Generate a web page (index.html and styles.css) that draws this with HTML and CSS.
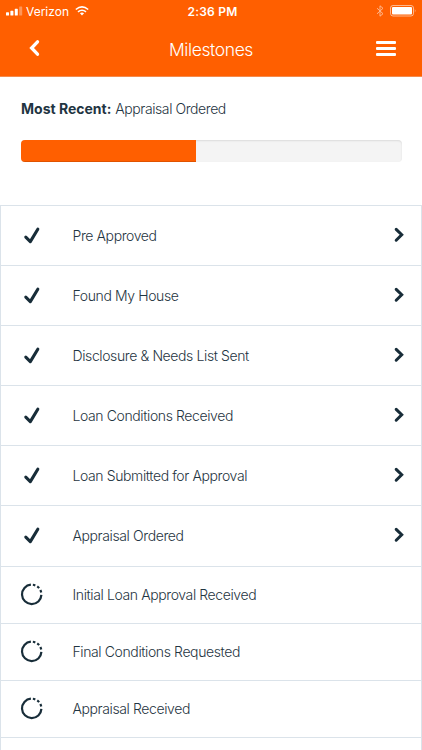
FILE: index.html
```html
<!DOCTYPE html>
<html lang="en">
<head>
    <meta charset="UTF-8">
    <meta name="viewport" content="width=device-width, initial-scale=1.0">
    <title>Milestones</title>
    <link rel="stylesheet" href="styles.css">
</head>
<body>
    <svg class="symbols">
        <symbol id="check" viewBox="0 0 24 24">
            <path d="M5.8 13.2L10.3 17.6L17.8 5.2" fill="none" stroke="currentColor" stroke-width="3.1" stroke-linecap="round" stroke-linejoin="round"/>
        </symbol>
        <symbol id="pending" viewBox="0 0 24 24">
            <path d="M21.4 11.9A9.7 9.7 0 1 1 10.9 1.7" fill="none" stroke="currentColor" stroke-width="2.2"/>
            <path d="M11.7 1.7A9.7 9.7 0 0 1 21.4 11.4" fill="none" stroke="currentColor" stroke-width="2.2" stroke-dasharray="0 1.2 2.5 2.2 2.5 2.2 2.5 9"/>
        </symbol>
        <symbol id="arrow" viewBox="0 0 12 18">
            <path d="M3.2 3.4L8.7 8.8L3.2 14.2" fill="none" stroke="currentColor" stroke-width="3" stroke-linecap="round"/>
        </symbol>
    </svg>

    <header class="header">
        <div class="status">
            <div class="carrier">
                <svg width="17" height="10" viewBox="0 0 17 10" fill="#fff">
                    <rect x="0" y="6.2" width="3" height="3.3" rx=".6"/>
                    <rect x="4.4" y="4.8" width="3" height="4.7" rx=".6"/>
                    <rect x="8.8" y="2.8" width="3" height="6.7" rx=".6"/>
                    <rect x="13.2" y=".5" width="3" height="9" rx=".6" opacity=".35"/>
                </svg>
                <span class="carrier-name">Verizon</span>
                <svg width="14" height="10" viewBox="0 0 14 10" fill="none" stroke="#fff" stroke-width="1.6">
                    <path d="M.8 3.5Q7 -1.7 13.2 3.5"/>
                    <path d="M3 5.9Q7 2.6 11 5.9"/>
                    <path d="M4.9 7.3Q7 5.8 9.1 7.3L7 9.6Z" fill="#fff" stroke="none"/>
                </svg>
            </div>
            <div class="time">2:36 PM</div>
            <div class="battery">
                <svg width="8" height="12" viewBox="0 0 8 12" fill="none" stroke="#fff" opacity=".55">
                    <path d="M1 3.2L7 8.7L4 11.2V.8L7 3.3L1 8.8"/>
                </svg>
                <svg width="27" height="12" viewBox="0 0 27 12">
                    <rect x=".5" y=".5" width="23" height="10.5" rx="2.5" fill="none" stroke="#fff" opacity=".55"/>
                    <rect x="2" y="2" width="20" height="7.5" rx="1" fill="#fff"/>
                    <path d="M24.8 4Q26.5 5.7 24.8 7.5Z" fill="#fff" opacity=".55"/>
                </svg>
            </div>
        </div>
        <nav class="nav">
            <svg class="back" width="14" height="20" viewBox="0 0 14 20" fill="none" stroke="#fff" stroke-width="3.3" stroke-linecap="round">
                <path d="M9.5 3.8L3.6 10L9.5 16.2"/>
            </svg>
            <h1 class="title">Milestones</h1>
            <div class="menu"><i></i><i></i><i></i></div>
        </nav>
    </header>

    <section class="summary">
        <p class="recent"><strong>Most Recent:</strong> <span>Appraisal Ordered</span></p>
        <div class="progress"><div class="progress-bar" style="width: 46%"></div></div>
    </section>

    <ul class="milestones">
        <li class="item done"><svg class="icon"><use href="#check"/></svg><span class="name">Pre Approved</span><svg class="arrow"><use href="#arrow"/></svg></li>
        <li class="item done"><svg class="icon"><use href="#check"/></svg><span class="name">Found My House</span><svg class="arrow"><use href="#arrow"/></svg></li>
        <li class="item done"><svg class="icon"><use href="#check"/></svg><span class="name">Disclosure &amp; Needs List Sent</span><svg class="arrow"><use href="#arrow"/></svg></li>
        <li class="item done"><svg class="icon"><use href="#check"/></svg><span class="name">Loan Conditions Received</span><svg class="arrow"><use href="#arrow"/></svg></li>
        <li class="item done"><svg class="icon"><use href="#check"/></svg><span class="name">Loan Submitted for Approval</span><svg class="arrow"><use href="#arrow"/></svg></li>
        <li class="item done"><svg class="icon"><use href="#check"/></svg><span class="name">Appraisal Ordered</span><svg class="arrow"><use href="#arrow"/></svg></li>
        <li class="item"><svg class="icon"><use href="#pending"/></svg><span class="name">Initial Loan Approval Received</span></li>
        <li class="item"><svg class="icon"><use href="#pending"/></svg><span class="name">Final Conditions Requested</span></li>
        <li class="item"><svg class="icon"><use href="#pending"/></svg><span class="name">Appraisal Received</span></li>
    </ul>
</body>
</html>
```

FILE: styles.css
```css
* {
    box-sizing: border-box;
}

body {
    margin: 0;
    background: #fff;
    color: #1f3542;
    font-family: Inter, "Liberation Sans", sans-serif;
    font-weight: 300;
    font-size: 14px;
}

.symbols {
    display: none;
}

.header {
    height: 77px;
    background: #ff5f00;
    border-bottom: 1px solid #f58b4c;
    color: #fff;
}

.status {
    display: grid;
    grid-template-columns: 1fr auto 1fr;
    align-items: center;
    height: 22px;
    padding: 0 5px 0 6px;
    font-size: 12px;
    font-weight: 400;
}

.carrier,
.battery {
    display: flex;
    align-items: center;
}

.carrier-name {
    margin: 0 6px 0 3px;
}

.time {
    padding-left: 2px;
    font-weight: 600;
    letter-spacing: .2px;
}

.battery {
    justify-content: flex-end;
    gap: 6px;
}

.nav {
    display: grid;
    grid-template-columns: 60px 1fr 60px;
    align-items: center;
    height: 54px;
}

.back {
    margin: -2px 0 0 28px;
}

.title {
    margin: 0;
    text-align: center;
    font-size: 17.5px;
    font-weight: 300;
    letter-spacing: -.4px;
}

.menu {
    display: grid;
    gap: 3px;
    width: 20px;
    margin: -2px 0 0 14px;
}

.menu i {
    height: 3px;
    border-radius: 1px;
    background: #fff;
}

.summary {
    height: 128px;
    padding: 22px 20px 0 21px;
}

.recent {
    margin: 0 0 21px;
    line-height: 20px;
}

.recent strong {
    font-weight: 700;
}

.recent span {
    letter-spacing: -.42px;
}

.progress {
    height: 22px;
    overflow: hidden;
    border-radius: 4px;
    background: #f4f4f4;
    box-shadow: inset 0 1px 2px rgba(0, 0, 0, .1);
}

.progress-bar {
    height: 100%;
    background: #ff5f00;
    box-shadow: inset 0 -1px 0 rgba(0, 0, 0, .12);
}

.milestones {
    height: 545px;
    margin: 0;
    padding: 0;
    list-style: none;
    border: solid #dbe3ea;
    border-width: 1px 1px 0;
}

.item {
    display: flex;
    align-items: center;
    height: 57.1px;
    padding: 0 16px 0 19px;
    border-bottom: 1px solid #dbe3ea;
}

.done {
    height: 60.1px;
}

.icon {
    width: 24px;
    height: 24px;
    color: #182d39;
}

.name {
    flex: 1;
    margin-left: 28.5px;
    line-height: 20px;
    letter-spacing: -.39px;
}

.arrow {
    width: 12px;
    height: 18px;
    margin-top: -2px;
    color: #182d39;
}
```
